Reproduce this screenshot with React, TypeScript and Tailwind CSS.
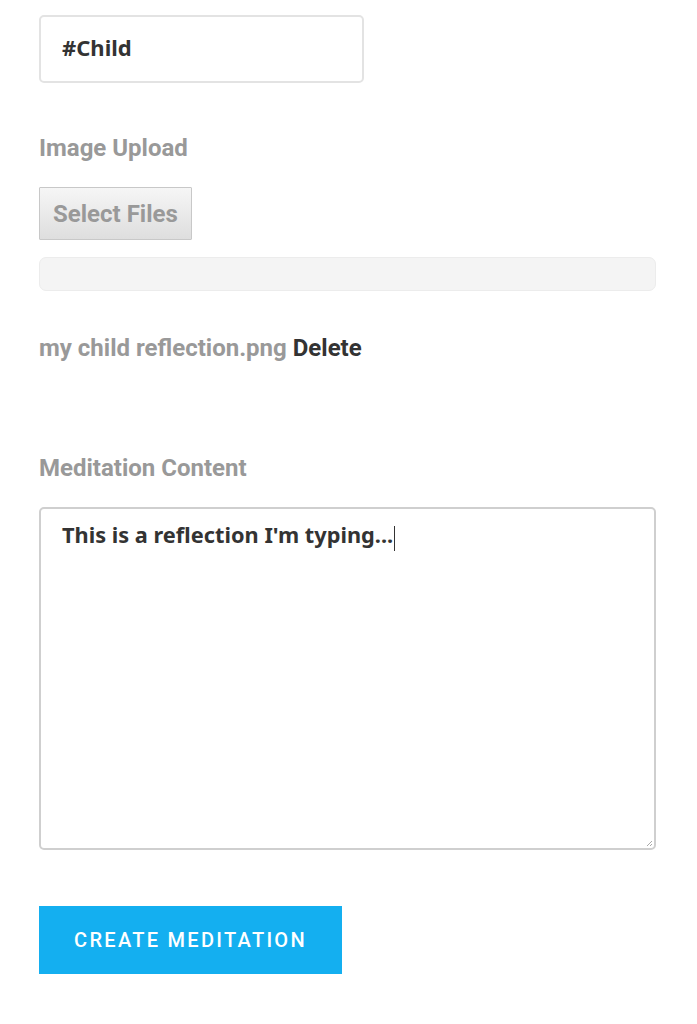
import React from 'react';

const roboto = { fontFamily: 'Roboto, "Liberation Sans", sans-serif' };

const App: React.FC = () => {
    return (
        <div className="min-h-screen bg-white pl-[39px] pr-[41px] pt-[15px] pb-[50px]" style={roboto}>
            <div className="w-[325px] h-[68px] border-2 border-[#e3e3e3] rounded-[5px] flex items-center px-[21px] pb-[3px]">
                <span className="text-[22px] font-bold text-[#333] font-['Noto_Sans',sans-serif]">#Child</span>
            </div>

            <h3 className="mt-[52px] text-[24px] font-bold text-[#999] leading-[26px]">Image Upload</h3>

            <button className="mt-[26px] h-[53px] px-[13px] border border-[#c8c8c8] bg-gradient-to-b from-[#f6f6f6] to-[#dedede] text-[24px] font-bold text-[#999] rounded-[1px] leading-none">
                Select Files
            </button>

            <div className="mt-[17px] h-[34px] rounded-[7px] bg-[#f4f4f4] border border-[#ececec]" />

            <p className="mt-[44px] text-[24px] font-bold leading-[26px]">
                <span className="text-[#999]">my child reflection.png</span>{' '}
                <span className="text-[#333]">Delete</span>
            </p>

            <h3 className="mt-[94px] text-[24px] font-bold text-[#999] leading-[26px]">Meditation Content</h3>

            <div className="mt-[26px] h-[343px] border-2 border-[#cfcfcf] rounded-[5px] px-[21px] pt-[10px] relative">
                <span className="text-[21.75px] font-bold text-[#333] font-['Noto_Sans',sans-serif]">
                    This is a reflection I'm typing...
                </span>
                <span className="inline-block w-[1px] h-[25px] bg-[#333] align-middle ml-[1px]" />
                <svg className="absolute right-[1px] bottom-[1px]" width="8" height="8" viewBox="0 0 8 8">
                    <path d="M7 2 L2 7 M7 5 L5 7" stroke="#aaa" strokeWidth="1" />
                </svg>
            </div>

            <button className="mt-[56px] w-[303px] h-[68px] bg-[#14aff0] text-white text-[20px] font-medium tracking-[2.3px]">
                CREATE MEDITATION
            </button>
        </div>
    );
};

export default App;
